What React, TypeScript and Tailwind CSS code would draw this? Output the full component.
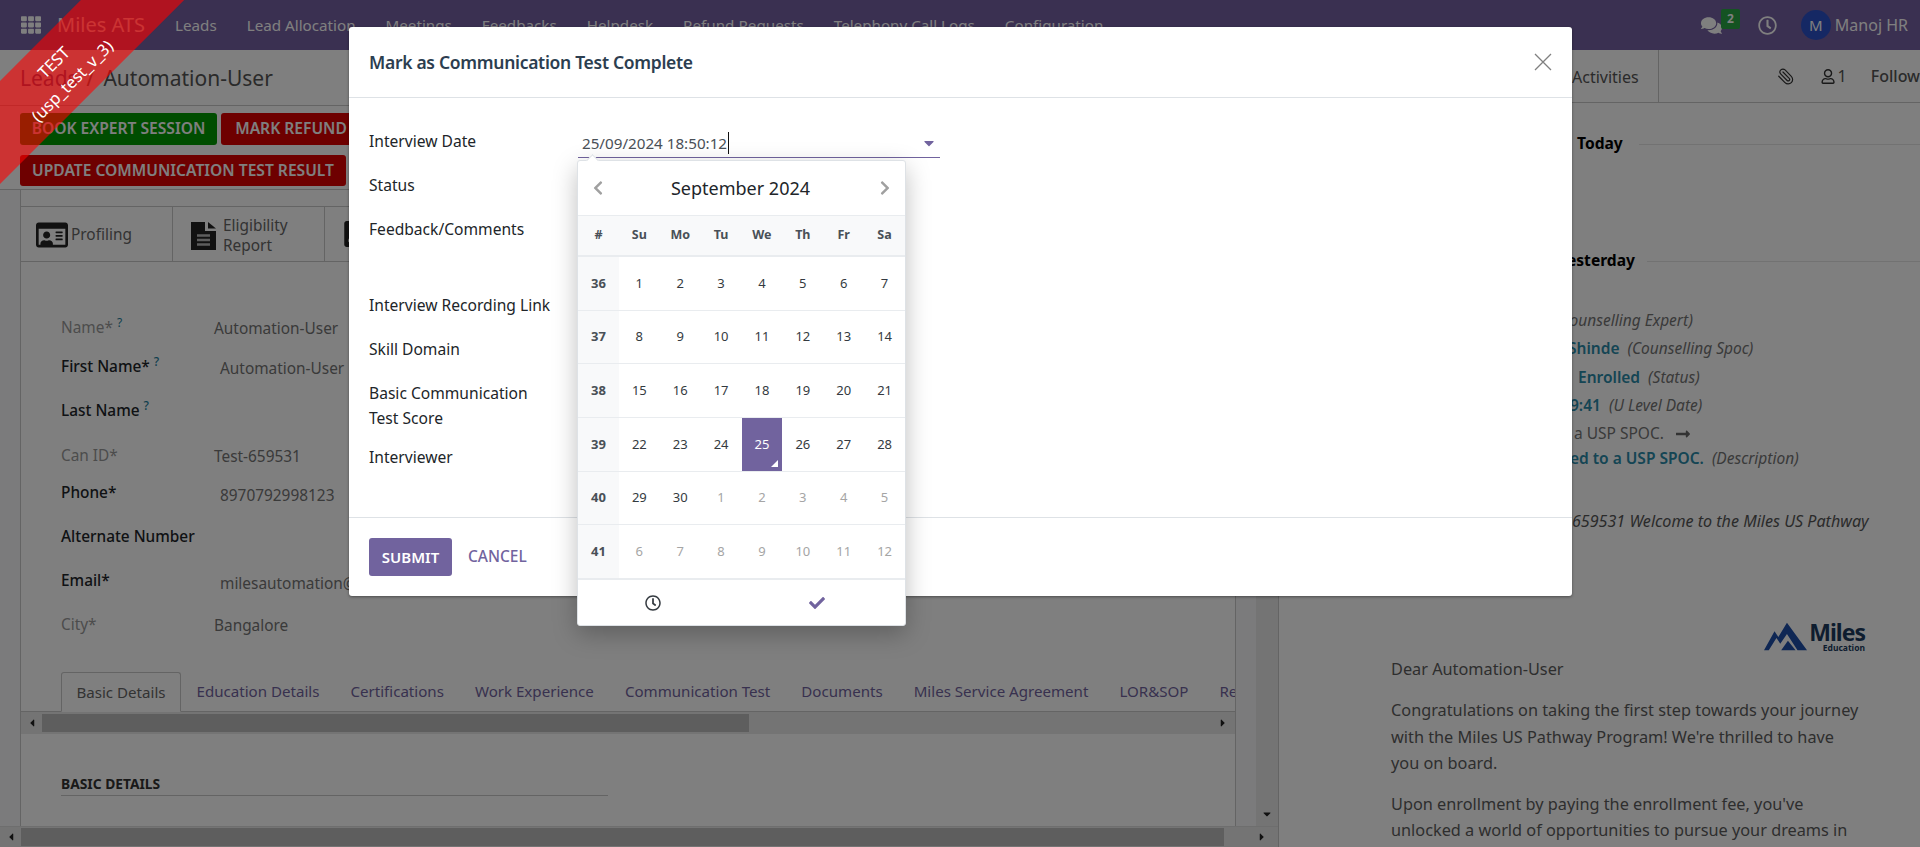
import React from "react";
import { FaTh, FaComments, FaRegClock, FaRegUser, FaRegIdCard, FaChevronLeft, FaChevronRight, FaCheck, FaLongArrowAltRight, FaCaretDown, FaCaretLeft, FaCaretRight, FaIdBadge } from "react-icons/fa";
import { Paperclip } from "lucide-react";

const navItems = ["Leads", "Lead Allocation", "Meetings", "Feedbacks", "Helpdesk", "Refund Requests", "Telephony Call Logs", "Configuration"];

const formRows = [
  { label: "Name*", help: true, bold: false, value: "Automation-User", vx: "ml-0", h: "h-[39px]", vy: "pt-px" },
  { label: "First Name*", help: true, bold: true, value: "Automation-User", vx: "ml-[6px]", h: "h-[44px]", vy: "pt-[2px]" },
  { label: "Last Name", help: true, bold: true, value: "", vx: "", h: "h-[45px]", vy: "" },
  { label: "Can ID*", help: false, bold: false, value: "Test-659531", vx: "ml-0", h: "h-[37px]", vy: "pt-px" },
  { label: "Phone*", help: false, bold: true, value: "8970792998123", vx: "ml-[6px]", h: "h-[44px]", vy: "pt-[3px]" },
  { label: "Alternate Number", help: false, bold: true, value: "", vx: "", h: "h-[44px]", vy: "" },
  { label: "Email*", help: false, bold: true, value: "milesautomation@gmail.com", vx: "ml-[6px]", h: "h-[44px]", vy: "pt-[3px]" },
  { label: "City*", help: false, bold: false, value: "Bangalore", vx: "ml-0", h: "h-[35px]", vy: "pt-px" },
];

const sheetTabs = ["Education Details", "Certifications", "Work Experience", "Communication Test", "Documents", "Miles Service Agreement", "LOR&SOP", "Resume"];

const dows = ["#", "Su", "Mo", "Tu", "We", "Th", "Fr", "Sa"];
const weeks: [number, number[], number][] = [
  [36, [1, 2, 3, 4, 5, 6, 7], 7],
  [37, [8, 9, 10, 11, 12, 13, 14], 7],
  [38, [15, 16, 17, 18, 19, 20, 21], 7],
  [39, [22, 23, 24, 25, 26, 27, 28], 7],
  [40, [29, 30, 1, 2, 3, 4, 5], 2],
  [41, [6, 7, 8, 9, 10, 11, 12], 0],
];

const modalRows = [
  ["Interview Date", "h-[44px]"],
  ["Status", "h-[44px]"],
  ["Feedback/Comments", "h-[76px]"],
  ["Interview Recording Link", "h-[44px]"],
  ["Skill Domain", "h-[44px]"],
  ["Basic Communication\nTest Score", "h-[64px]"],
  ["Interviewer", "h-[44px]"],
];

function Scrollbar({ thumb, end }: { thumb: string; end: string }) {
  return (
    <div className="flex h-full items-center bg-[#e8e8e8]">
      <div className="flex w-[21px] shrink-0 justify-center text-[#222]"><FaCaretLeft size={12} /></div>
      <div className={`h-[18px] ${thumb} shrink-0 bg-[#bdbdbd]`} />
      <div className="flex-1" />
      <div className={`flex ${end} shrink-0 justify-center text-[#222]`}><FaCaretRight size={12} /></div>
    </div>
  );
}

function FileIcon() {
  return (
    <svg width="25" height="28" viewBox="0 0 25 28" className="shrink-0">
      <path fill="#222" d="M0 0 H14 V9 H25 V28 H0 Z" />
      <path fill="#222" d="M17 0 L25 6.5 H17 Z" />
      <path stroke="#bbb" strokeWidth="2.4" d="M6 13.5 H19 M6 18 H19 M6 22.5 H19" />
    </svg>
  );
}

function Datepicker() {
  return (
    <div className="absolute left-[577px] top-[160px] z-40 w-[329px] rounded-[3px] border border-[#dee2e6] bg-white text-[#343a40] shadow-[0_8px_24px_rgba(0,0,0,0.25)]">
      <div className="absolute -top-[5px] left-[10px] size-[9px] rotate-45 border-l border-t border-[#dee2e6] bg-white" />
      <div className="flex h-[54px] items-center justify-between px-[12px]">
        <FaChevronLeft size={16} className="text-[#a0a0a0]" />
        <span className="pr-[2px] text-[18px] text-[#212529]">September 2024</span>
        <FaChevronRight size={16} className="text-[#a0a0a0]" />
      </div>
      <div className="grid h-[42px] grid-cols-8 items-center border-y border-b-2 border-[#e9ecef] bg-[#f8f9fa] text-center text-[12.5px] font-bold text-[#495057]">
        {dows.map((d) => <span key={d}>{d}</span>)}
      </div>
      {weeks.map(([w, days, cur]) => (
        <div key={w} className="grid h-[53.7px] grid-cols-8 border-b border-[#e9ecef] text-center text-[13px]">
          <div className="flex items-center justify-center bg-[#f8f9fa] font-bold text-[#495057]">{w}</div>
          {days.map((d, i) => {
            const active = d === 25;
            const muted = i >= cur;
            return (
              <div key={i} className={`relative flex items-center justify-center ${active ? "bg-[#71639e] text-white" : muted ? "text-[#a5a5a5]" : ""}`}>
                {d}
                {active && <span className="absolute bottom-[4px] right-[4px] size-0 border-b-[7px] border-l-[7px] border-b-white border-l-transparent" />}
              </div>
            );
          })}
        </div>
      ))}
      <div className="flex h-[46px] items-center gap-[148px] border-t border-[#e9ecef] pl-[67px]">
        <FaRegClock size={16} className="text-[#343a40]" />
        <FaCheck size={16} className="text-[#71639e]" />
      </div>
    </div>
  );
}

function Modal() {
  return (
    <div className="absolute left-[349px] top-[27px] z-30 flex h-[569px] w-[1223px] flex-col rounded-[3px] bg-white shadow-[0_1px_3px_rgba(0,0,0,0.4)]">
      <div className="flex h-[71px] shrink-0 items-center justify-between border-b border-[#dee2e6] px-[20px]">
        <h4 className="text-[17.5px] font-semibold tracking-[-0.3px] text-[#2c3e50]">Mark as Communication Test Complete</h4>
        <svg width="18" height="18" viewBox="0 0 18 18"><path d="M1 1 L17 17 M17 1 L1 17" stroke="#808080" strokeWidth="1.3" /></svg>
      </div>
      <div className="h-[419px] shrink-0 pl-[20px] pt-[31px]">
        {modalRows.map(([l, h]) => (
          <div key={l} className={`${h} whitespace-pre-line text-[15.6px] leading-[25px] text-[#212529]`}>{l}</div>
        ))}
        <div className="absolute left-[229px] top-[103px] flex h-[28px] w-[362px] items-center border-b border-[#71639e] pb-[2px] pl-[4px] text-[15.2px] text-[#495057]">
          <span className="border-r border-[#111] pr-px leading-[22px]">25/09/2024 18:50:12</span>
          <FaCaretDown size={16} className="absolute right-[3px] text-[#71639e]" />
        </div>
      </div>
      <div className="flex flex-1 items-start gap-[16px] border-t border-[#dee2e6] pl-[20px] pt-[20px]">
        <button className="h-[38px] w-[83px] rounded-[3px] bg-[#71639e] text-[15px] font-semibold text-white">SUBMIT</button>
        <button className="h-[38px] text-[15.5px] font-medium text-[#71639e]">CANCEL</button>
      </div>
    </div>
  );
}

function Ribbon() {
  return (
    <div className="absolute left-0 top-0 z-50 size-[200px] overflow-hidden">
      <div className="absolute left-[-87px] top-[33px] flex h-[73px] w-[300px] -rotate-45 flex-col items-center justify-center bg-[rgba(255,0,0,0.6)] pr-[3px] pt-[3px] text-center text-[16.5px] leading-[26px] text-white">
        <span>TEST</span>
        <span>(usp_test_v_3)</span>
      </div>
    </div>
  );
}

function Logo() {
  return (
    <div className="flex items-start justify-end pr-[55px]">
      <svg width="44" height="29" viewBox="0 0 46 29" className="mt-[1px]">
        <path fill="#1f4fa8" d="M0 29 L11 9 L15 15 L24 0 L45 29 L35 29 L24 12 L17 22 L13 16 L5 29 Z" />
        <path fill="#1f4fa8" d="M18 29 L25 19 L33 29 Z" />
      </svg>
      <div className="ml-[1px] flex flex-col items-end leading-none text-[#1c3b5e]">
        <span className="text-[23px] font-bold leading-[22px] tracking-[-1px]">Miles</span>
        <span className="mt-[1px] text-[8.5px] font-bold">Education</span>
      </div>
    </div>
  );
}

const teal = "mr-[8px] font-semibold text-[#2a8aa8]";

function Chatter() {
  return (
    <div className="flex min-w-0 flex-1 flex-col overflow-hidden whitespace-nowrap text-[15.5px] text-[#747474]">
      <div className="flex h-[53px] shrink-0 items-center border-b border-[#c8c8c8] pl-[293px] text-[#555]">
        <span className="flex h-full items-center border-r border-[#c8c8c8] pr-[19px] pt-[2px] text-[16px]">Activities</span>
        <Paperclip size={19} strokeWidth={1.6} className="ml-[118px] -scale-x-100 text-[#333]" />
        <FaRegUser size={15} className="ml-[26px] text-[#333]" />
        <span className="ml-[3px] text-[16px]">1</span>
        <span className="ml-[24px] text-[16px] font-medium">Follow</span>
      </div>
      <div className="mt-[30px] flex h-[22px] shrink-0 items-center pl-[298px] text-[15.6px] font-bold text-black">
        <span>Today</span><div className="ml-[16px] h-px flex-1 bg-[#e4e4e4]" />
      </div>
      <div className="mt-[95px] flex h-[22px] shrink-0 items-center pl-[279px] text-[15.6px] font-bold text-black">
        <span>Yesterday</span><div className="ml-[12px] h-px flex-1 bg-[#e4e4e4]" />
      </div>
      <div className="mt-[35px] flex h-[28px] shrink-0 items-center pl-[277px] italic">(Counselling Expert)</div>
      <div className="flex h-[28px] shrink-0 items-center pl-[289px]"><b className={teal}>Shinde</b><i>(Counselling Spoc)</i></div>
      <div className="flex h-[29px] shrink-0 items-center pl-[299px]"><b className={teal}>Enrolled</b><i>(Status)</i></div>
      <div className="flex h-[28px] shrink-0 items-center pl-[291px]"><b className={teal}>9:41</b><i>(U Level Date)</i></div>
      <div className="flex h-[28px] shrink-0 items-center pl-[295px]"><span>a USP SPOC.</span><FaLongArrowAltRight size={16} className="ml-[11px] text-[#666]" /></div>
      <div className="flex h-[22px] shrink-0 items-center pl-[291px]"><b className={teal}>ed to a USP SPOC.</b><i>(Description)</i></div>
      <div className="mt-[39px] flex h-[24px] shrink-0 items-center pl-[293px] text-[16.1px] italic text-[#555]">659531 Welcome to the Miles US Pathway</div>
      <div className="mt-[88px] shrink-0"><Logo /></div>
      <div className="mt-[3px] shrink-0 whitespace-normal pl-[112px] text-[16.3px] leading-[26.5px] text-[#5c5c5c]">
        <p>Dear Automation-User</p>
        <p className="mt-[15px] w-[475px]">Congratulations on taking the first step towards your journey with the Miles US Pathway Program! We're thrilled to have you on board.</p>
        <p className="mt-[14px] w-[475px]">Upon enrollment by paying the enrollment fee, you've unlocked a world of opportunities to pursue your dreams in</p>
      </div>
    </div>
  );
}

export default function App() {
  return (
    <div className="relative h-[847px] w-[1920px] overflow-hidden bg-white font-['Noto_Sans',sans-serif] text-[15.4px]">
      <nav className="flex h-[50px] items-center bg-[#7460a2] text-white">
        <FaTh size={20} className="ml-[21px]" />
        <span className="ml-[16px] text-[20px]">Miles ATS</span>
        <div className="flex gap-[30px] pl-[30px] text-[15.2px]">
          {navItems.map((t) => <span key={t}>{t}</span>)}
        </div>
        <div className="ml-auto flex items-center">
          <div className="relative">
            <FaComments size={21} />
            <span className="absolute -top-[6px] left-[20px] flex h-[20px] w-[19px] items-center justify-center rounded-[2px] bg-[#28a745] text-[12px] font-bold">2</span>
          </div>
          <FaRegClock size={19} className="ml-[36px]" />
          <span className="ml-[24px] flex size-[30px] items-center justify-center rounded-full bg-[#2b50c8] text-[15px]">M</span>
          <span className="ml-[4px] mr-[12px] text-[16px]">Manoj HR</span>
        </div>
      </nav>
      <div className="flex h-[797px]">
        <div className="flex w-[1279px] shrink-0 flex-col border-r border-[#c8c8c8]">
          <div className="flex min-h-0 flex-1">
            <div className="flex min-w-0 flex-1 flex-col">
              <div className="flex h-[56px] shrink-0 items-center border-b border-[#c8c8c8] pl-[20px] pt-[2px] text-[21px] text-[#555]">
                <span className="text-[#71639e]">Leads</span><span className="mx-[9px] text-[#777]">/</span><span>Automation-User</span>
              </div>
              <div className="flex h-[84px] shrink-0 flex-col gap-[10px] border-b border-[#c8c8c8] pl-[20px] pt-[7px] text-[15.6px] font-semibold text-white">
                <div className="flex gap-[4px]">
                  <span className="flex h-[32px] w-[197px] items-center justify-center rounded-[3px] bg-[#009a00]">BOOK EXPERT SESSION</span>
                  <span className="flex h-[32px] w-[140px] items-center justify-center rounded-[3px] bg-[#dc0000]">MARK REFUND</span>
                </div>
                <span className="flex h-[31px] w-[326px] items-center justify-center rounded-[3px] bg-[#dc0000]">UPDATE COMMUNICATION TEST RESULT</span>
              </div>
              <div className="flex min-h-0 flex-1 bg-[#f6f7f8]">
                <div className="mx-[20px] flex min-w-0 flex-1 flex-col overflow-hidden border-x border-[#c8c8c8] bg-white">
                  <div className="mt-[16px] flex h-[56px] shrink-0 border-y border-[#c8c8c8] text-[#666]">
                    <div className="flex w-[152px] items-center gap-[3px] border-r border-[#c8c8c8] pl-[15px] pt-[1px]"><FaRegIdCard size={32} className="text-[#222]" /><span>Profiling</span></div>
                    <div className="flex w-[152px] items-center gap-[7px] border-r border-[#c8c8c8] pl-[18px] pt-[4px] leading-[20px]"><FileIcon /><span>Eligibility<br />Report</span></div>
                    <div className="flex w-[152px] items-center pl-[16px]"><FaIdBadge size={26} className="text-[#222]" /></div>
                  </div>
                  <div className="mt-[55px] shrink-0 pl-[40px]">
                    {formRows.map((r) => (
                      <div key={r.label} className={`flex ${r.h} items-start leading-[22px]`}>
                        <span className={`w-[153px] shrink-0 ${r.bold ? "font-medium text-[#212529]" : "text-[#999]"}`}>
                          {r.label}{r.help && <sup className="ml-[4px] text-[12px] text-[#1f7f9b]">?</sup>}
                        </span>
                        {r.value && <span className={`${r.vx} ${r.vy} text-[#747474]`}>{r.value}</span>}
                      </div>
                    ))}
                  </div>
                  <div className="mt-[22px] flex h-[41px] shrink-0 items-end whitespace-nowrap border-b border-[#c8c8c8] pl-[40px] text-[15.1px] text-[#71639e]">
                    <span className="-mb-px flex h-[40px] w-[120px] shrink-0 items-center justify-center rounded-t-[3px] border border-[#c8c8c8] border-b-white bg-white text-[#666]">Basic Details</span>
                    {sheetTabs.map((t) => <span key={t} className="flex h-[40px] shrink-0 items-center px-[15.5px]">{t}</span>)}
                  </div>
                  <div className="h-[22px] shrink-0"><Scrollbar thumb="w-[707px]" end="w-[24px]" /></div>
                  <div className="shrink-0 pl-[40px] pt-[40px]">
                    <div className="w-[547px] border-b border-[#c8c8c8] pb-[1px] text-[13.8px] font-bold leading-[20px] text-[#333]">BASIC DETAILS</div>
                    <div className="mt-[27px] font-medium text-[#212529]">Source of lead</div>
                  </div>
                </div>
              </div>
            </div>
            <div className="flex w-[22px] shrink-0 items-end justify-center bg-[#e8e8e8] pb-[6px] text-[#222]"><FaCaretDown size={12} /></div>
          </div>
          <div className="h-[21px] shrink-0 border-t border-[#ddd]"><Scrollbar thumb="w-[1203px]" end="w-[33px]" /></div>
        </div>
        <Chatter />
      </div>
      <div className="absolute inset-0 z-20 bg-black/50" />
      <Modal />
      <Datepicker />
      <Ribbon />
    </div>
  );
}
